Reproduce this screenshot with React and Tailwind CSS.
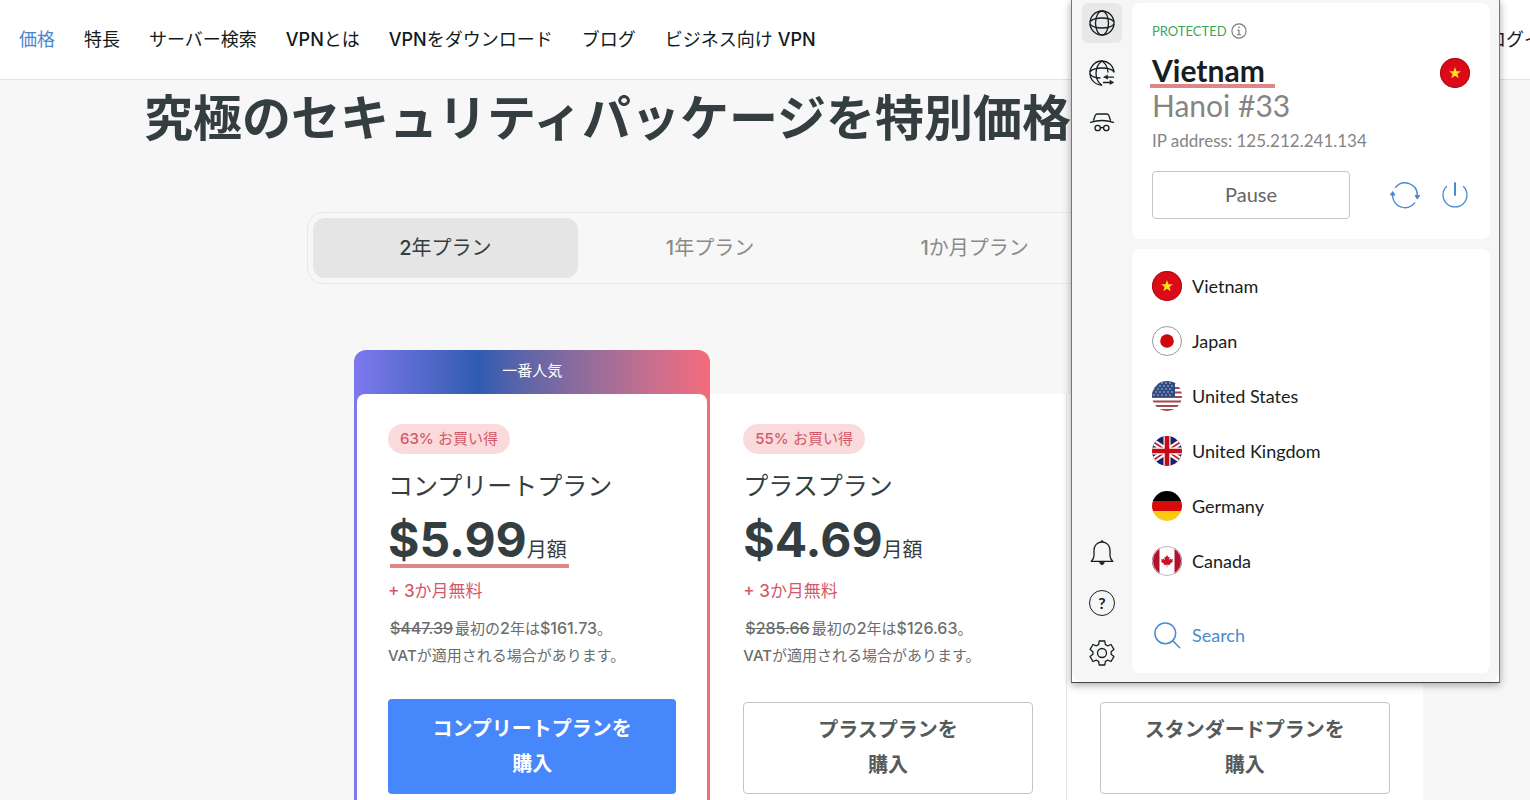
// App.jsx
const NAV_LINKS = [
    { id: 'price', label: '価格', active: true },
    { id: 'features', label: '特長' },
    { id: 'servers', label: 'サーバー検索' },
    { id: 'about', latin: 'VPN', label: 'とは' },
    { id: 'download', latin: 'VPN', label: 'をダウンロード' },
    { id: 'blog', label: 'ブログ' },
    { id: 'business', label: 'ビジネス向け ', after: 'VPN' },
];

const TERMS = [
    { count: '2', label: '年プラン' },
    { count: '1', label: '年プラン' },
    { count: '1', label: 'か月プラン' },
];

const PLANS = [
    {
        name: 'コンプリートプラン',
        off: '63%',
        price: '$5.99',
        before: '$447.39',
        total: '$161.73',
        popular: true,
    },
    {
        name: 'プラスプラン',
        off: '55%',
        price: '$4.69',
        before: '$285.66',
        total: '$126.63',
    },
    { name: 'スタンダードプラン' },
];

const Icon = ({ size = 26, className = '', children }) => (
    <svg
        width={size}
        height={size}
        viewBox="0 0 26 26"
        fill="none"
        stroke="currentColor"
        strokeWidth="1.3"
        strokeLinecap="round"
        strokeLinejoin="round"
        className={className}
        aria-hidden="true"
    >
        {children}
    </svg>
);

const GlobeIcon = () => (
    <Icon>
        <circle cx="13" cy="13" r="12" />
        <ellipse cx="13" cy="13" rx="6.5" ry="12" />
        <path d="M1.2 11.5C4 8.8 8 8 13 8s9 .8 11.8 3.5M1.2 14.5C4 17.200 8 18 13 18s9-.8 11.800-3.500" />
    </Icon>
);

const GlobeSettingsIcon = () => (
    <Icon>
        <path d="M24.900 12A12 12 0 1 0 12.500 25" />
        <path d="M13 1C9.500 3.500 7 8 7 13s2 9.500 5.500 12M13 1c3.500 2.500 5.600 6 6 11" />
        <path d="M1.200 11.500C4 8.800 8 8 13 8s9 .8 11.800 3.500M1.200 14.500c2.300 2.300 5.800 3.400 9.800 3.500" />
        <path d="M15 17.200h9.500M14.500 22.500h9.500" />
        <path d="M18.500 15.200v4l-3-2zM21 20.500v4l3-2z" fill="currentColor" strokeWidth="0.6" />
    </Icon>
);

const IncognitoIcon = () => (
    <Icon>
        <path d="M1.500 12.300c7-2.200 16-2.200 23 0M4.500 10.200l1.700-4.600C6.600 4.600 7.300 4 8.300 4h9.400c1 0 1.700.6 2.100 1.600l1.700 4.600" />
        <circle cx="8.700" cy="18" r="2.700" />
        <circle cx="17.300" cy="18" r="2.700" />
        <path d="M11.500 18c1-.7 2-.7 3 0" />
    </Icon>
);

const BellIcon = () => (
    <Icon>
        <path d="M13 2c-4.800 0-8 3.600-8 8.200v5.600c0 2-.8 3.600-2.800 5.600h21.600c-2-2-2.800-3.600-2.800-5.600v-5.600C21 5.600 17.800 2 13 2z" />
        <path d="M11.800 1.700a1.200 1.200 0 0 1 2.400 0M10.800 22.300h4.400c0 1.500-1 2.400-2.200 2.400s-2.200-.9-2.200-2.400z" fill="currentColor" strokeWidth="0.6" />
    </Icon>
);

const GearIcon = () => (
    <Icon>
        <path d="M10.200 1h5.600l.6 3.600 2.200 1.200L22 4.500l2.900 4.900-2.800 2.300v2.600l2.800 2.300-2.900 4.900-3.400-1.300-2.200 1.200-.6 3.600h-5.600l-.6-3.600-2.200-1.200L4 21.500l-2.900-4.900 2.800-2.300v-2.600L1.100 9.400 4 4.500l3.400 1.300 2.200-1.200z" />
        <circle cx="13" cy="13" r="4.500" />
    </Icon>
);

const HelpIcon = () => (
    <span className="flex size-[26px] items-center justify-center rounded-full border border-current text-base font-bold">
        ?
    </span>
);

const InfoIcon = () => (
    <Icon size={16} className="text-[#777]">
        <g strokeWidth="1.800">
            <circle cx="13" cy="13" r="11.500" />
            <path d="M11 11.500h2V19M10.500 19h5" />
            <path d="M13 6.800v.6" strokeWidth="2.600" />
        </g>
    </Icon>
);

const RefreshIcon = () => (
    <Icon size={30}>
        <path d="M4.900 6.200A10.700 10.700 0 0 1 23.700 13M2.300 13A10.700 10.700 0 0 0 21.300 20" />
        <path d="M23.700 16.200l-1.800-2.700h3.600zM2.300 10.200L.5 12.900h3.600z" fill="currentColor" strokeWidth="1" />
    </Icon>
);

const PowerIcon = () => (
    <Icon>
        <path d="M4.500 4.500a12 12 0 1 0 17 0" />
        <path d="M13 1v12" strokeWidth="2" />
    </Icon>
);

const SearchIcon = () => (
    <Icon size={30}>
        <circle cx="11.500" cy="11.500" r="9" />
        <path d="M18 18l6 6" />
    </Icon>
);

const STAR = '15,9 16.500,13.200 20.900,13.300 17.400,16 18.700,20.200 15,17.700 11.300,20.200 12.600,16 9.100,13.300 13.500,13.200';

const FLAGS = {
    vn: (
        <>
            <rect width="30" height="30" fill="#dd0a17" />
            <polygon points={STAR} fill="#fde01f" />
        </>
    ),
    jp: (
        <>
            <rect width="30" height="30" fill="#fff" />
            <circle cx="15" cy="15" r="6.800" fill="#cc0a0a" />
        </>
    ),
    us: (
        <>
            <rect width="30" height="30" fill="#fff" />
            {[1, 6, 10.500, 15, 19.500, 24, 28].map(y => (
                <rect key={y} y={y} width="30" height="2" fill="#a4474c" />
            ))}
            <rect width="23" height="16" fill="#2d4b80" />
            {[2, 5, 8, 11, 14].map((y, row) =>
                [2, 6, 10, 14, 18].map(x => (
                    <circle key={`${x}-${y}`} cx={x + (row % 2) * 2} cy={y} r="0.700" fill="#dfe5f0" />
                ))
            )}
        </>
    ),
    gb: (
        <>
            <rect width="30" height="30" fill="#1d1f6b" />
            <path d="M-3 3l36 24M33 3L-3 27" stroke="#fff" strokeWidth="6" />
            <path d="M-3 3l36 24M33 3L-3 27" stroke="#c4161d" strokeWidth="1.600" />
            <path d="M15 0v30M0 15h30" stroke="#fff" strokeWidth="7" />
            <path d="M15 0v30M0 15h30" stroke="#c60c12" strokeWidth="4.600" />
        </>
    ),
    de: (
        <>
            <rect width="30" height="10" fill="#000" />
            <rect y="10" width="30" height="10" fill="#d80a0a" />
            <rect y="20" width="30" height="10" fill="#fdc80f" />
        </>
    ),
    ca: (
        <>
            <rect width="30" height="30" fill="#fff" />
            <path d="M0 0h7.500v30H0zM22.500 0H30v30h-7.500z" fill="#b3122e" />
            <path
                d="M15 9l1.300 2.300 1.300-.6-.5 3.200 1.700-1.400.4.900 1.800-.2-.7 1.700.8.700-3.300 2.400.3 1.100-2.800-.4v2.500h-.6v-2.500l-2.800.4.300-1.100-3.300-2.400.8-.7-.7-1.700 1.800.2.400-.9 1.700 1.400-.5-3.200 1.300.6z"
                fill="#cc1228"
            />
        </>
    ),
};

const FLAG_RING = { vn: '#a5101a', jp: '#9a9a9a', us: 'none', gb: 'none', de: 'none', ca: '#bbb' };

const LOCATIONS = [
    { code: 'vn', name: 'Vietnam' },
    { code: 'jp', name: 'Japan' },
    { code: 'us', name: 'United States' },
    { code: 'gb', name: 'United Kingdom' },
    { code: 'de', name: 'Germany' },
    { code: 'ca', name: 'Canada' },
];

function Flag({ code, id }) {
    return (
        <svg width="30" height="30" viewBox="0 0 30 30" className="shrink-0" aria-hidden="true">
            <clipPath id={id}>
                <circle cx="15" cy="15" r="15" />
            </clipPath>
            <g clipPath={`url(#${id})`}>{FLAGS[code]}</g>
            <circle cx="15" cy="15" r="14.500" fill="none" stroke={FLAG_RING[code]} />
        </svg>
    );
}

function Header() {
    return (
        <header className="border-b border-[#e2e2e2] bg-white">
            <nav className="-mr-[30px] flex h-[79px] items-center gap-[29px] pl-[19px] text-lg whitespace-nowrap text-[#111a1c]">
                {NAV_LINKS.map(link => (
                    <a key={link.id} href={`#${link.id}`} className={link.active ? 'text-[#4a86cf]' : ''}>
                        {link.latin && <span className="font-medium">{link.latin}</span>}
                        {link.label}
                        {link.after && <span className="font-medium">{link.after}</span>}
                    </a>
                ))}
                <a href="#login" className="ml-auto">ログイン</a>
            </nav>
        </header>
    );
}

function TermTabs() {
    return (
        <div
            role="tablist"
            className="mt-[54px] mr-8 ml-[307px] grid max-w-[806px] grid-cols-3 rounded-2xl border border-[#e8e8e8] p-[5px]"
        >
            {TERMS.map((term, i) => (
                <button
                    key={term.count + term.label}
                    type="button"
                    role="tab"
                    aria-selected={i === 0}
                    className={
                        i === 0
                            ? 'h-[60px] rounded-xl bg-[#e5e5e5] text-xl text-[#343e40]'
                            : 'h-[60px] rounded-xl text-xl text-[#8a8a8a]'
                    }
                >
                    <span className="font-medium">{term.count}</span>
                    {term.label}
                </button>
            ))}
        </div>
    );
}

function PlanDetails({ plan }) {
    return (
        <>
            <p className="w-fit rounded-full bg-[#fadadb] px-3 text-[15px] leading-[30px] text-[#d4586b]">
                <span className="font-medium">{plan.off}</span> お買い得
            </p>
            <h2 className="mt-3.5 text-[25px] leading-9">{plan.name}</h2>
            <p className="relative mt-2 flex w-fit items-baseline">
                <span className="text-5xl leading-[56px] font-bold">{plan.price}</span>
                <span className="text-xl">月額</span>
                {plan.popular && <span className="absolute bottom-0 left-0.5 h-1 w-full bg-[#dd8788]" />}
            </p>
            <p className="mt-2.5 text-[17px] leading-[27px] text-[#d4586b]">
                <span className="font-medium">+ 3</span>か月無料
            </p>
            <p className="mt-2.5 text-[15px] leading-[27px] text-[#6c6c6c]">
                <s className="px-0.5 text-base leading-[27px] font-medium">{plan.before}</s>
                最初の<span className="text-base leading-[27px] font-medium">2</span>年は
                <span className="text-base leading-[27px] font-medium">{plan.total}</span>。
                <br />
                <span className="font-medium">VAT</span>が適用される場合があります。
            </p>
        </>
    );
}

function PlanCard({ plan }) {
    const button = (
        <button
            type="button"
            className={
                plan.popular
                    ? 'mt-auto h-[95px] rounded bg-[#4687fb] text-xl leading-[35px] font-bold text-white'
                    : 'mt-auto h-[92px] rounded border border-[#c4c6c6] text-xl leading-[35px] font-bold text-[#555a5b]'
            }
        >
            {plan.name}を
            <br />
            購入
        </button>
    );

    if (plan.popular) {
        return (
            <section className="flex flex-col rounded-t-xl bg-linear-to-r from-[#7d79ee] via-[#2e5cb0] via-35% to-[#f56b7c] px-[3px]">
                <p className="h-11 text-center text-[15px] leading-[42px] text-white">一番人気</p>
                <div className="flex grow flex-col rounded-t-lg bg-white px-[31px] pt-[30px] pb-1.5">
                    <PlanDetails plan={plan} />
                    {button}
                </div>
            </section>
        );
    }

    return (
        <section className="mt-11 flex flex-col border-r border-[#e6e6e6] bg-white px-[33px] pt-[30px] pb-1.5 last:border-r-0">
            {plan.price && <PlanDetails plan={plan} />}
            {button}
        </section>
    );
}

function RailButton({ label, active, children }) {
    return (
        <button
            type="button"
            aria-label={label}
            className={
                active
                    ? 'flex size-10 items-center justify-center rounded-md bg-[#e8e8e8]'
                    : 'flex size-10 items-center justify-center rounded-md'
            }
        >
            {children}
        </button>
    );
}

function VpnWindow() {
    return (
        <aside className="absolute top-0 right-[30px] w-[429px] border border-t-0 border-[#777] border-b-[#444] bg-white font-['Lato',sans-serif] text-[#161e21] shadow-[0_2px_8px_rgba(0,0,0,0.35)]">
            <div className="flex rounded-b-xl bg-[#f6f6f6] pt-[3px] pr-[9px] pb-[9px]">
                <div className="flex w-[60px] flex-col items-center gap-2.5">
                    <RailButton label="Locations" active><GlobeIcon /></RailButton>
                    <RailButton label="Connection rules"><GlobeSettingsIcon /></RailButton>
                    <RailButton label="Private browsing"><IncognitoIcon /></RailButton>
                    <div className="grow" />
                    <RailButton label="Notifications"><BellIcon /></RailButton>
                    <RailButton label="Help"><HelpIcon /></RailButton>
                    <RailButton label="Settings"><GearIcon /></RailButton>
                </div>

                <div className="flex grow flex-col gap-2.5">
                    <div className="rounded-lg bg-white px-5 pt-[18px] pb-5">
                        <div className="flex items-center gap-1 text-[13px] leading-5 text-[#3aa757]">
                            PROTECTED
                            <InfoIcon />
                        </div>
                        <div className="mt-3 flex items-start justify-between">
                            <div className="text-3xl leading-[35px]">
                                <h2 className="relative w-fit font-bold">
                                    Vietnam
                                    <span className="absolute -right-2.5 bottom-0 -left-0.5 h-1 bg-[#dd8788]" />
                                </h2>
                                <p className="text-[#858585]">Hanoi #33</p>
                            </div>
                            <div className="pt-[5px]">
                                <Flag code="vn" id="flag-current" />
                            </div>
                        </div>
                        <p className="mt-1 text-[17px] leading-[27px] text-[#858585]">IP address: 125.212.241.134</p>
                        <div className="mt-[17px] flex items-center justify-between">
                            <button
                                type="button"
                                className="h-12 w-[198px] rounded border border-[#c4c4c4] pb-0.5 text-xl text-[#666]"
                            >
                                Pause
                            </button>
                            <div className="flex items-center gap-[22px] pr-0.5 text-[#4a8ad0]">
                                <button type="button" aria-label="Reconnect"><RefreshIcon /></button>
                                <button type="button" aria-label="Disconnect"><PowerIcon /></button>
                            </div>
                        </div>
                    </div>

                    <div className="rounded-lg bg-white px-5 pt-[9px] pb-[11px] text-lg">
                        <ul>
                            {LOCATIONS.map(loc => (
                                <li key={loc.code}>
                                    <button type="button" className="flex h-[55px] w-full items-center gap-2.5">
                                        <Flag code={loc.code} id={`flag-${loc.code}`} />
                                        {loc.name}
                                    </button>
                                </li>
                            ))}
                        </ul>
                        <button type="button" className="mt-[19px] flex h-[55px] w-full items-center gap-2.5 text-[#4a8ad0]">
                            <SearchIcon />
                            Search
                        </button>
                    </div>
                </div>
            </div>
        </aside>
    );
}

export default function App() {
    return (
        <div className="relative flex min-h-screen flex-col overflow-hidden bg-[#f7f7f7] font-['Inter','Noto_Sans_CJK_JP',sans-serif] text-[#343e40]">
            <Header />
            <main className="flex grow flex-col">
                <h1 className="pl-36 text-[49px] leading-[78px] font-bold whitespace-nowrap">
                    究極のセキュリティパッケージを特別価格
                </h1>
                <TermTabs />
                <div className="mt-[66px] mr-[107px] ml-[354px] grid grow grid-cols-3">
                    {PLANS.map(plan => (
                        <PlanCard key={plan.name} plan={plan} />
                    ))}
                </div>
            </main>
            <VpnWindow />
        </div>
    );
}
